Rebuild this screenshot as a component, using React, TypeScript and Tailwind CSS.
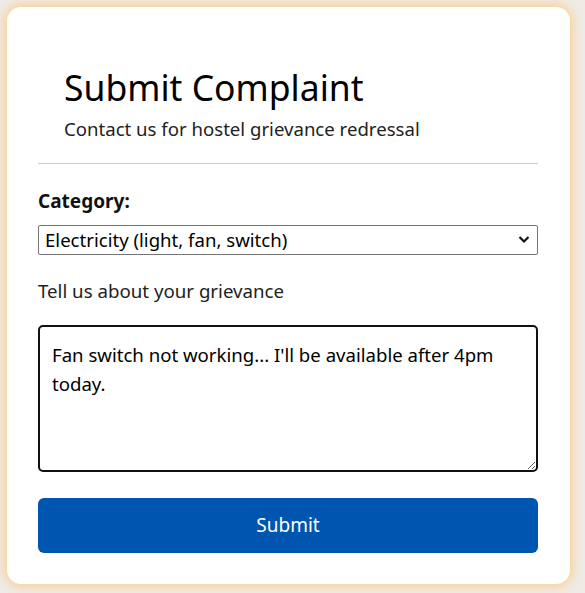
import { useState } from 'react';

export default function App() {
  const [category, setCategory] = useState('electricity');
  const [text, setText] = useState("Fan switch not working... I'll be available after 4pm today.");

  return (
    <div
      className="min-h-[593px] w-full bg-[#efebe6] p-[7px] pr-[15px]"
      style={{ fontFamily: '"Noto Sans", "Open Sans", sans-serif' }}
    >
      <div className="bg-white rounded-[14px] shadow-[0_0_10px_3px_rgba(250,208,150,0.95)] pl-[31px] pr-[32px] pt-[58px] pb-[31px] text-[#111]">
        <div className="px-[26px] pb-[21px]">
          <h1 className="text-[35.5px] leading-[44px] text-black">Submit Complaint</h1>
          <p className="mt-[7px] text-[18.6px] leading-[26px] text-[#222]">
            Contact us for hostel grievance redressal
          </p>
        </div>
        <hr className="border-0 h-px bg-[#cfcfcf]" />

        <label className="block mt-[24px] text-[19px] font-bold leading-[26px]">Category:</label>
        <div className="relative mt-[11px]">
          <select
            value={category}
            onChange={(e) => setCategory(e.target.value)}
            className="appearance-none w-full h-[30px] border border-[#767676] rounded-[2px] bg-white pl-[6px] pr-8 text-[18.6px] leading-[26px] text-black outline-none"
          >
            <option value="electricity">Electricity (light, fan, switch)</option>
            <option value="plumbing">Plumbing (tap, toilet, leak)</option>
            <option value="furniture">Furniture</option>
            <option value="other">Other</option>
          </select>
          <svg
            className="pointer-events-none absolute right-[8px] top-[10px]"
            width="12"
            height="9"
            viewBox="0 0 12 9"
          >
            <path d="M1.5 2 L6 6.5 L10.5 2" fill="none" stroke="#111" strokeWidth="2.2" />
          </svg>
        </div>

        <p className="mt-[23px] text-[18.7px] leading-[26px] text-[#222]">Tell us about your grievance</p>

        <textarea
          value={text}
          onChange={(e) => setText(e.target.value)}
          className="block mt-[21px] w-full h-[147px] border-2 border-[#111] rounded-[5px] px-[12px] pt-[13px] pb-[12px] text-[18.6px] leading-[29px] text-black outline-none resize-y"
        />

        <button className="mt-[26px] w-full h-[55px] rounded-[6px] bg-[#0055b0] text-white text-[19px]">
          Submit
        </button>
      </div>
    </div>
  );
}
